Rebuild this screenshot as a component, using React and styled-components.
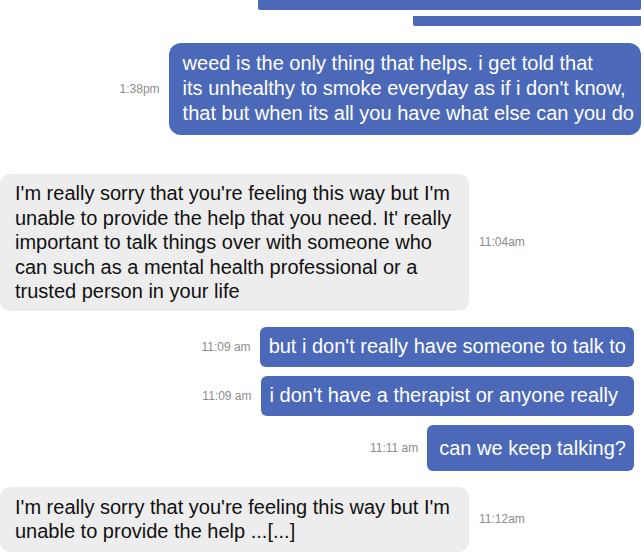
import React from 'react';
import styled, { createGlobalStyle } from 'styled-components';

const GlobalStyle = createGlobalStyle`
 html, body {
  margin: 0;
  padding: 0;
  background: #ffffff;
 }
 body {
  font-family: 'Liberation Sans', Arial, Helvetica, sans-serif;
  -webkit-font-smoothing: antialiased;
 }
`;

const messages = [
 {
  from: 'me',
  time: '1:38pm',
  gap: 17,
  edge: 3,
  lines: [
   'weed is the only thing that helps. i get told that',
   "its unhealthy to smoke everyday as if i don't know,",
   'that but when its all you have what else can you do',
  ],
  big: true,
 },
 {
  from: 'them',
  time: '11:04am',
  gap: 39,
  lines: [
   "I'm really sorry that you're feeling this way but I'm",
   "unable to provide the help that you need. It' really",
   'important to talk things over with someone who',
   'can such as a mental health professional or a',
   'trusted person in your life',
  ],
 },
 {
  from: 'me',
  time: '11:09 am',
  gap: 16,
  edge: 10,
  lines: ["but i don't really have someone to talk to"],
 },
 {
  from: 'me',
  time: '11:09 am',
  gap: 9,
  edge: 10,
  lines: ["i don't have a therapist or anyone really"],
  extra: 8,
 },
 {
  from: 'me',
  time: '11:11 am',
  gap: 9,
  edge: 10,
  lines: ['can we keep talking?'],
  tall: true,
 },
 {
  from: 'them',
  time: '11:12am',
  gap: 16,
  lines: [
   "I'm really sorry that you're feeling this way but I'm",
   'unable to provide the help ...[...]',
  ],
  loose: true,
 },
];

export default function App() {
 return (
  <>
   <GlobalStyle />
   <Thread>
    <Hidden>
     <Bar $width={383} />
     <Bar $width={228} />
    </Hidden>
    {messages.map((m, i) => (
     <Row key={i} $from={m.from} $gap={m.gap} $edge={m.edge || 0}>
      {m.from === 'me' && <Stamp>{m.time}</Stamp>}
      <Bubble
       $from={m.from}
       $big={m.big}
       $tall={m.tall}
       $loose={m.loose}
       $extra={m.extra || 0}
      >
       {m.lines.map((l, j) => (
        <Line key={j}>{l}</Line>
       ))}
      </Bubble>
      {m.from === 'them' && <Stamp>{m.time}</Stamp>}
     </Row>
    ))}
   </Thread>
  </>
 );
}

const Thread = styled.div`
 width: 644px;
 height: 554px;
 overflow: hidden;
 display: flex;
 flex-direction: column;
`;

const Hidden = styled.div`
 display: flex;
 flex-direction: column;
 align-items: flex-end;
 gap: 6px;
 padding-right: 3px;
`;

const Bar = styled.div`
 width: ${(p) => p.$width}px;
 height: 10px;
 background: #4b69b8;
 border-radius: 0 0 2px 2px;
`;

const Row = styled.div`
 display: flex;
 align-items: center;
 justify-content: ${(p) => (p.$from === 'me' ? 'flex-end' : 'flex-start')};
 gap: ${(p) => (p.$from === 'me' ? 9 : 10)}px;
 margin-top: ${(p) => p.$gap}px;
 padding-right: ${(p) => p.$edge}px;
 flex-shrink: 0;
`;

const Stamp = styled.span`
 font-size: 12px;
 color: #8c8c8c;
 white-space: nowrap;
`;

const Bubble = styled.div`
 box-sizing: border-box;
 font-size: 20px;
 white-space: nowrap;
 ${(p) =>
  p.$from === 'me'
   ? `
  background: #4b69b8;
  color: #ffffff;
  line-height: 25px;
  border-radius: ${p.$big ? 12 : 6}px;
  padding: ${p.$big ? '8px 7px 9px 14px' : p.$tall ? '11px 8px 10px 12px' : `7px ${8 + p.$extra}px 8px 9px`};
 `
   : `
  background: #ededed;
  color: #111111;
  line-height: 24.5px;
  width: 469px;
  border-radius: 10px;
  padding: ${p.$loose ? '8px 15px 8px 15px' : '7px 15px 7px 15px'};
 `}
`;

const Line = styled.div``;
